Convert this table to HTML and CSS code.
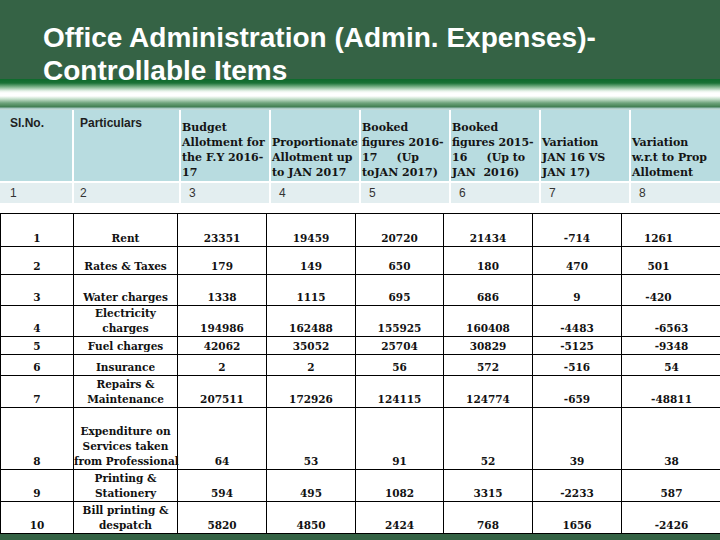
FILE: index.html
```html
<!DOCTYPE html>
<html lang="en">
<head>
<meta charset="utf-8">
<title>Office Administration (Admin. Expenses)- Controllable Items</title>
<link rel="stylesheet" href="styles.css">
</head>
<body>
<div class="slide">
  <header class="band">
    <h1 class="title">Office Administration (Admin. Expenses)-<br>Controllable Items</h1>
  </header>
  <div class="stripe"></div>

  <div class="head-grid">
    <div class="hcell hsans">Sl.No.</div>
    <div class="hcell hsans">Particulars</div>
    <div class="hcell"><span>Budget</span><span>Allotment for</span><span>the F.Y 2016-</span><span>17</span></div>
    <div class="hcell"><span>Proportionate</span><span>Allotment up</span><span>to JAN 2017</span></div>
    <div class="hcell"><span>Booked</span><span>figures 2016-</span><span>17&nbsp;&nbsp;&nbsp;&nbsp;&nbsp;(Up</span><span>toJAN 2017)</span></div>
    <div class="hcell"><span>Booked</span><span>figures 2015-</span><span>16&nbsp;&nbsp;&nbsp;&nbsp;&nbsp;(Up to</span><span>JAN&nbsp;&nbsp;2016)</span></div>
    <div class="hcell"><span>Variation</span><span>JAN 16 VS</span><span>JAN 17)</span></div>
    <div class="hcell"><span>Variation</span><span>w.r.t to Prop</span><span>Allotment</span></div>

    <div class="ncell n1">1</div>
    <div class="ncell n2">2</div>
    <div class="ncell">3</div>
    <div class="ncell">4</div>
    <div class="ncell">5</div>
    <div class="ncell">6</div>
    <div class="ncell">7</div>
    <div class="ncell">8</div>
  </div>

  <table class="data">
    <colgroup>
      <col class="c1"><col class="c2"><col class="c3"><col class="c4"><col class="c5"><col class="c6"><col class="c7"><col class="c8">
    </colgroup>
    <tbody>
      <tr class="r1"><td>1</td><td>Rent</td><td>23351</td><td>19459</td><td>20720</td><td>21434</td><td>-714</td><td class="last">1261</td></tr>
      <tr class="r2"><td>2</td><td>Rates &amp; Taxes</td><td>179</td><td>149</td><td>650</td><td>180</td><td>470</td><td class="last">501</td></tr>
      <tr class="r3"><td>3</td><td>Water charges</td><td>1338</td><td>1115</td><td>695</td><td>686</td><td>9</td><td class="last">-420</td></tr>
      <tr class="r4"><td>4</td><td>Electricity<br>charges</td><td>194986</td><td>162488</td><td>155925</td><td>160408</td><td>-4483</td><td>-6563</td></tr>
      <tr class="r5"><td>5</td><td>Fuel charges</td><td>42062</td><td>35052</td><td>25704</td><td>30829</td><td>-5125</td><td>-9348</td></tr>
      <tr class="r6"><td>6</td><td>Insurance</td><td>2</td><td>2</td><td>56</td><td>572</td><td>-516</td><td>54</td></tr>
      <tr class="r7"><td>7</td><td>Repairs &amp;<br>Maintenance</td><td>207511</td><td>172926</td><td>124115</td><td>124774</td><td>-659</td><td>-48811</td></tr>
      <tr class="r8"><td>8</td><td>Expenditure on<br>Services taken<br>from Professional</td><td>64</td><td>53</td><td>91</td><td>52</td><td>39</td><td>38</td></tr>
      <tr class="r9"><td>9</td><td>Printing &amp;<br>Stationery</td><td>594</td><td>495</td><td>1082</td><td>3315</td><td>-2233</td><td>587</td></tr>
      <tr class="r10"><td>10</td><td>Bill printing &amp;<br>despatch</td><td>5820</td><td>4850</td><td>2424</td><td>768</td><td>1656</td><td>-2426</td></tr>
    </tbody>
  </table>

  <footer class="footer"><span class="brand">fppt.com</span></footer>
</div>
</body>
</html>
```
FILE: styles.css
```css
html, body {
  margin: 0;
  padding: 0;
}

body {
  width: 720px;
  height: 540px;
  overflow: hidden;
  background: #ffffff;
  font-family: "DejaVu Serif", serif;
}

.slide {
  width: 720px;
  height: 540px;
  overflow: hidden;
  display: flex;
  flex-direction: column;
}

.band {
  flex: 0 0 79px;
  height: 79px;
  min-height: 0;
  box-sizing: border-box;
  background: #356345;
  padding: 21px 0 0 43px;
}

.title {
  margin: 0;
  font: bold 28px/33px "Liberation Sans", Arial, sans-serif;
  color: #ffffff;
  white-space: nowrap;
  position: relative;
  z-index: 1;
}

.stripe {
  flex: 0 0 31px;
  min-height: 0;
  background: linear-gradient(to bottom,
    #0d6a2b 0px,
    #1a7236 4px,
    #7fb58c 8px,
    #e9f3eb 12px,
    #ffffff 14px,
    #ffffff 17px,
    #c5dfcb 20px,
    #6fa47d 24px,
    #4b875a 27px,
    #3f7b51 28px,
    #9fc3bb 29px,
    #c9dfe0 31px);
}

.head-grid {
  flex: 0 0 auto;
  display: grid;
  grid-template-columns: 72px 105px 88px 88px 88px 88px 88px 1fr;
  grid-template-rows: 71px 20px;
  gap: 2px;
  background: #ffffff;
}

.hcell {
  background: #b8dce0;
  overflow: hidden;
  display: flex;
  flex-direction: column;
  justify-content: flex-end;
  padding: 0 0 1px 1px;
  font: bold 11px/15px "DejaVu Serif", serif;
  color: #141414;
  white-space: nowrap;
}

.hsans {
  justify-content: flex-start;
  padding: 6px 0 0 6px;
  font: bold 12px/14px "Liberation Sans", Arial, sans-serif;
  color: #1e1e1e;
}

.hsans:first-child {
  padding-left: 10px;
}

.ncell {
  background: #e3eef0;
  display: flex;
  align-items: center;
  padding-left: 8px;
  font: 12px/14px "Liberation Sans", Arial, sans-serif;
  color: #333333;
}

.ncell.n1 {
  padding-left: 10px;
}

.ncell.n2 {
  padding-left: 6px;
}

.data {
  margin-top: 10px;
  width: 721px;
  table-layout: fixed;
  border-collapse: collapse;
  flex: 0 0 auto;
}

.c1 { width: 73px; }
.c2 { width: 104px; }
.c3 { width: 89px; }
.c4 { width: 89px; }
.c5 { width: 88px; }
.c6 { width: 89px; }
.c7 { width: 89px; }
.c8 { width: 100px; }

.data td {
  border: 1px solid #000000;
  padding: 0;
  text-align: center;
  vertical-align: bottom;
  font: bold 10.5px/15px "DejaVu Serif", serif;
  color: #111111;
  white-space: nowrap;
}

.data td.last {
  padding-right: 26px;
}

.r1 td { height: 32px; }
.r2 td { height: 27px; }
.r3 td { height: 30px; }
.r4 td { height: 30px; }
.r5 td { height: 17px; }
.r6 td { height: 20px; }
.r7 td { height: 31px; }
.r8 td { height: 61px; }
.r9 td { height: 31px; }
.r10 td { height: 31px; }

.footer {
  flex: 1 0 auto;
  background: #356345;
  text-align: right;
  padding: 2px 8px 0 0;
}

.brand {
  display: inline-block;
  font: 8px/8px "Liberation Sans", Arial, sans-serif;
  color: #9fb3a6;
  letter-spacing: 0.5px;
}
```
